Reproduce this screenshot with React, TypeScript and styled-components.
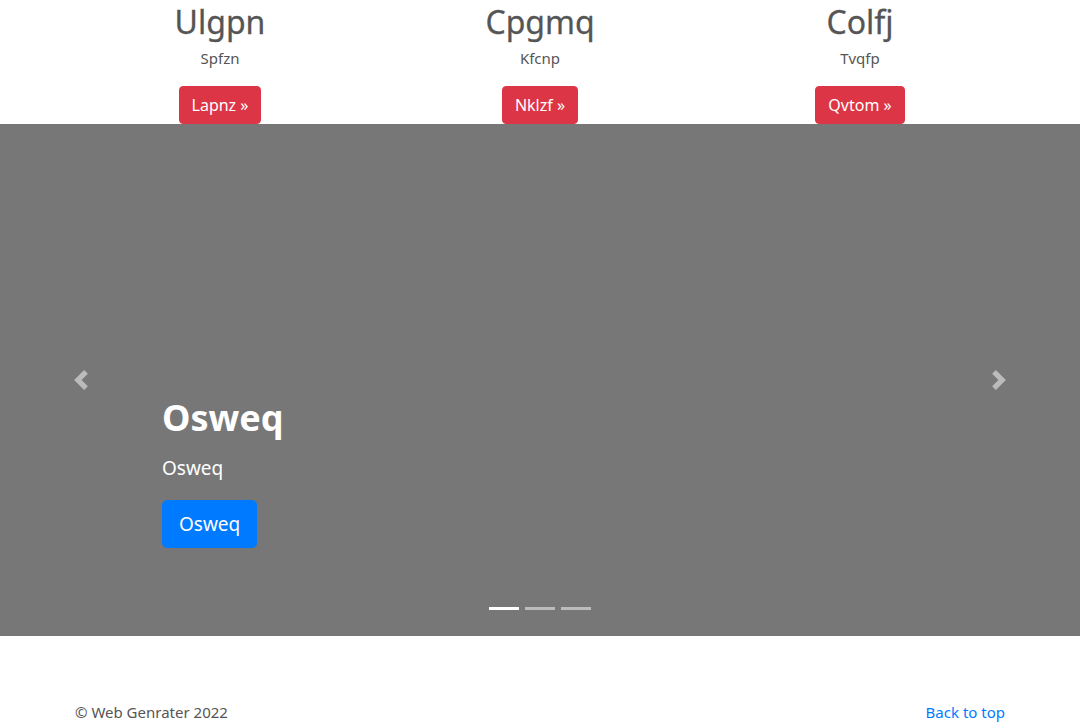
import React from "react";
import styled, { createGlobalStyle } from "styled-components";

const Global = createGlobalStyle`
  * { box-sizing: border-box; }
  html, body { margin: 0; padding: 0; }
  body {
    font-family: "Noto Sans", "Open Sans", sans-serif;
    font-size: 16px;
    line-height: 1.5;
    color: #555;
    background: #fff;
  }
`;

const Page = styled.div`
  display: flex;
  flex-direction: column;
`;

const Marketing = styled.section`
  width: 960px;
  margin: 0 auto;
  display: grid;
  grid-template-columns: repeat(3, 1fr);
`;

const Col = styled.div`
  padding: 0 15px;
  display: flex;
  flex-direction: column;
  align-items: center;
  text-align: center;
`;

const ColTitle = styled.h2`
  margin: 3px 0 5px;
  font-size: 32px;
  font-weight: 400;
  line-height: 38px;
  height: 38px;
  -webkit-text-stroke: 0.3px #555;
`;

const ColText = styled.p`
  margin: 0 0 16px;
  font-size: 15px;
  line-height: 24px;
`;

const DangerButton = styled.a`
  display: inline-block;
  padding: 6px 12px;
  font-size: 16px;
  line-height: 24px;
  color: #fff;
  background: #dc3545;
  border: 1px solid #dc3545;
  border-radius: 4px;
  text-decoration: none;
`;

const Carousel = styled.section`
  position: relative;
  height: 512px;
  background: #777;
  margin-bottom: 64px;
`;

const Caption = styled.div`
  position: absolute;
  left: 15%;
  right: 15%;
  bottom: 88px;
  color: #fff;
  display: flex;
  flex-direction: column;
  align-items: flex-start;
  z-index: 10;
`;

const CaptionTitle = styled.h1`
  margin: 0 0 11px;
  font-size: 36px;
  font-weight: 700;
  line-height: 48px;
`;

const CaptionText = styled.p`
  margin: 0 0 17px;
  font-size: 19px;
  line-height: 30px;
`;

const PrimaryLg = styled.a`
  display: inline-block;
  padding: 8px 16px;
  font-size: 19px;
  line-height: 30px;
  color: #fff;
  background: #007bff;
  border: 1px solid #007bff;
  border-radius: 4.8px;
  text-decoration: none;
`;

const Control = styled.a<{ $side: "left" | "right" }>`
  position: absolute;
  top: 0;
  bottom: 0;
  ${(p) => (p.$side === "left" ? "left: 0;" : "right: 0;")}
  width: 15%;
  display: flex;
  align-items: center;
  justify-content: center;
  opacity: 0.5;
`;

const Indicators = styled.ol`
  position: absolute;
  left: 0;
  right: 0;
  bottom: 26px;
  margin: 0;
  padding: 0;
  list-style: none;
  display: flex;
  justify-content: center;
  gap: 6px;
`;

const Dot = styled.li<{ $active?: boolean }>`
  width: 30px;
  height: 3px;
  background: #fff;
  opacity: ${(p) => (p.$active ? 1 : 0.5)};
`;

const Footer = styled.footer`
  width: 960px;
  margin: 0 auto;
  padding: 0 15px;
  display: flex;
  justify-content: space-between;
  font-size: 15px;
  line-height: 24px;
`;

const FooterText = styled.p`
  margin: 0 0 16px;
`;

const TopLink = styled.a`
  color: #007bff;
  text-decoration: none;
`;

const Chevron = ({ dir }: { dir: "prev" | "next" }) => (
  <svg width="20" height="20" viewBox="0 0 8 8" fill="#fff">
    {dir === "prev" ? (
      <path d="M5.25 0l-4 4 4 4 1.5-1.5L4.25 4l2.5-2.5L5.25 0z" />
    ) : (
      <path d="M2.75 0l-1.5 1.5L3.75 4l-2.5 2.5L2.75 8l4-4-4-4z" />
    )}
  </svg>
);

const cols = [
  { t: "Ulgpn", p: "Spfzn", b: "Lapnz" },
  { t: "Cpgmq", p: "Kfcnp", b: "Nklzf" },
  { t: "Colfj", p: "Tvqfp", b: "Qvtom" },
];

export default function App() {
  return (
    <Page>
      <Global />
      <Marketing>
        {cols.map((c) => (
          <Col key={c.t}>
            <ColTitle>{c.t}</ColTitle>
            <ColText>{c.p}</ColText>
            <DangerButton href="#">{c.b} »</DangerButton>
          </Col>
        ))}
      </Marketing>
      <Carousel>
        <Indicators>
          <Dot $active />
          <Dot />
          <Dot />
        </Indicators>
        <Caption>
          <CaptionTitle>Osweq</CaptionTitle>
          <CaptionText>Osweq</CaptionText>
          <PrimaryLg href="#">Osweq</PrimaryLg>
        </Caption>
        <Control $side="left" href="#">
          <Chevron dir="prev" />
        </Control>
        <Control $side="right" href="#">
          <Chevron dir="next" />
        </Control>
      </Carousel>
      <Footer>
        <FooterText>© Web Genrater 2022</FooterText>
        <FooterText>
          <TopLink href="#">Back to top</TopLink>
        </FooterText>
      </Footer>
    </Page>
  );
}
